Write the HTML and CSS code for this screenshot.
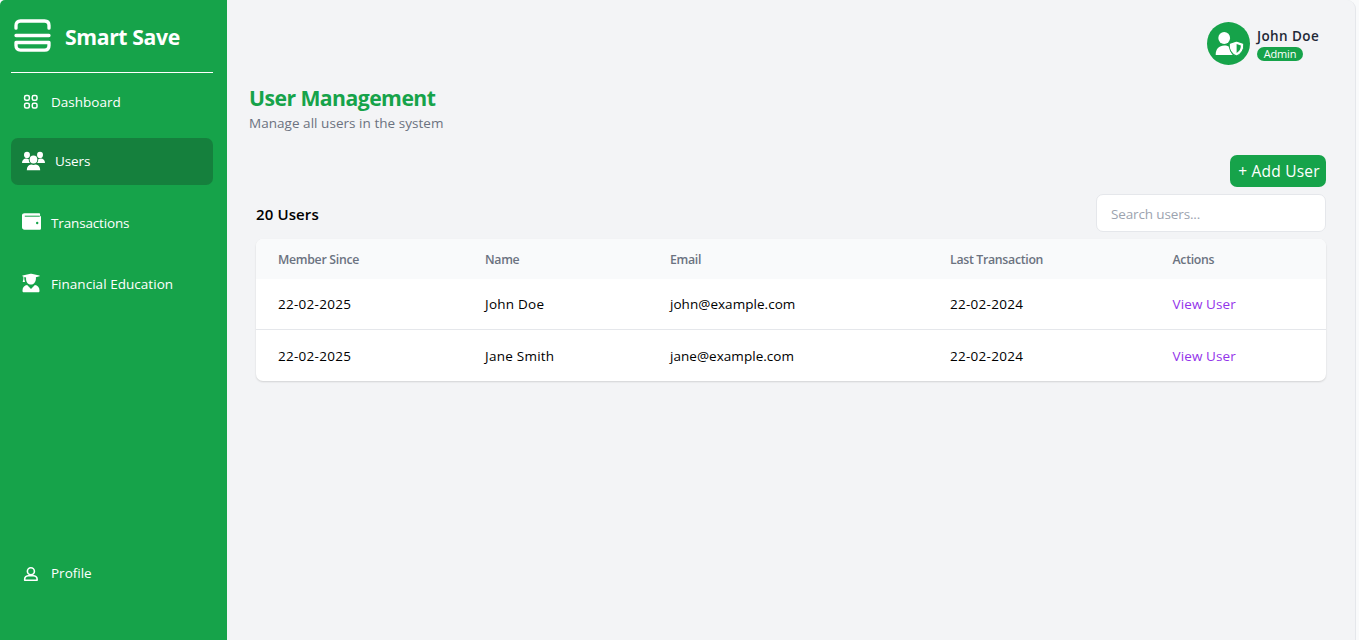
FILE: index.html
```html
<!DOCTYPE html>
<html lang="en">
<head>
<meta charset="utf-8">
<title>Smart Save</title>
<link rel="stylesheet" href="styles.css">
</head>
<body>
<div class="app">
  <aside class="sidebar">
    <div class="brand">
      <svg class="brand-logo" width="37" height="34" viewBox="0 0 37 34" fill="none" stroke="#fff" stroke-width="3.300" stroke-linecap="round" stroke-linejoin="round">
        <path d="M2 9.200V6.500C2 3.500 3.500 2 6.500 2h24C33.500 2 35 3.500 35 6.500v2.700M2 16.500h33M2 23.500h33v3c0 3-1.500 4.700-4.500 4.700h-24C3.500 31.200 2 29.500 2 26.500z"/>
      </svg>
      <span class="brand-name">Smart Save</span>
    </div>
    <nav class="nav">
      <a class="nav-item dashboard">
        <svg width="16" height="16" viewBox="0 0 16 16" fill="none" stroke="#fff" stroke-width="1.500"><rect x="1.600" y="1.600" width="4.700" height="4.700" rx="1.500"/><rect x="9.300" y="1.600" width="4.700" height="4.700" rx="1.500"/><rect x="1.600" y="9.300" width="4.700" height="4.700" rx="1.500"/><rect x="9.300" y="9.300" width="4.700" height="4.700" rx="1.500"/></svg>
        <span class="label">Dashboard</span>
      </a>
      <a class="nav-item users active">
        <svg width="23" height="20" viewBox="0 0 24 20" preserveAspectRatio="none" fill="#fff"><circle cx="5.200" cy="3.900" r="3.100"/><circle cx="18.800" cy="3.900" r="3.100"/><path d="M0 12c0-2.900 1.900-4.500 4.400-4.500 1.100 0 2 .3 2.600.8 0 1.400.4 2.700 1.200 3.700zM24 12c0-2.900-1.900-4.500-4.400-4.500-1.100 0-2 .3-2.600.8 0 1.400-.4 2.700-1.200 3.700z"/><circle cx="12" cy="8.600" r="4"/><path d="M5 19.300c0-3.600 2.100-5.500 4.600-5.700 1.500.6 3.300.6 4.800 0 2.500.2 4.600 2.100 4.600 5.700z"/></svg>
        <span class="label">Users</span>
      </a>
      <a class="nav-item transactions">
        <svg width="20" height="18" viewBox="0 0 20 18"><path fill="#fff" d="M2.500.3H17c.7 0 1.100.5 1.100 1.200v1.600c.5 0 .9.500.9 1.200v11c0 1-.6 1.500-1.500 1.500h-15C1 16.800 0 15.800 0 14.300V2.500C0 1.200 1 .3 2.500.3z"/><path d="M2.800 3.200h15" stroke="#16a34a" stroke-width="1"/><circle cx="15.200" cy="10" r="1.200" fill="#16a34a"/></svg>
        <span class="label">Transactions</span>
      </a>
      <a class="nav-item education">
        <svg width="18" height="20" viewBox="0 0 18 20" fill="#fff"><path d="M.6 2.400 8.500.7c.3-.1.700-.1 1 0l7.900 1.700c.5.200.5.700 0 .9l-3.500 1c.4 3.800-1.500 7.300-4.900 7.300S3.600 8.400 4.100 4.500L2.300 4v1.900L3 9H.7l.7-3.100V3.600l-.8-.3c-.5-.200-.5-.700 0-.900zM5.100 12.100 9 16l3.900-3.900c2.700.4 4.600 2.500 4.600 5.300v.5c0 .8-.5 1.300-1.300 1.300H1.800c-.8 0-1.300-.5-1.300-1.300v-.5c0-2.800 1.900-4.900 4.600-5.300z"/></svg>
        <span class="label">Financial Education</span>
      </a>
      <a class="nav-item profile">
        <svg width="16" height="16" viewBox="0 0 16 16" fill="none" stroke="#fff" stroke-width="1.600" stroke-linejoin="round"><circle cx="7.900" cy="5.200" r="3.500"/><path d="M1.700 14.200v-1.100c0-2 1.900-3.300 3.700-3.300h5c1.800 0 3.700 1.300 3.700 3.300v1.100z"/></svg>
        <span class="label">Profile</span>
      </a>
    </nav>
  </aside>
  <main class="main">
    <header class="account">
      <svg class="avatar" width="43" height="43" viewBox="0 0 43 43"><circle cx="21.500" cy="21.500" r="21.500" fill="#16a34a"/><circle cx="17.200" cy="16" r="5.900" fill="#fff"/><path fill="#fff" d="M8.700 33c0-6 3.300-9.500 8.600-9.500 2.400 0 4.300.6 5.800 1.900.2 3 1 5.600 2.700 7.600z"/><path fill="#fff" stroke="#16a34a" stroke-width="1.200" d="m29.500 18.900 7.300 2.500c.5 5.300-2.100 10.500-7.300 12.700-5.200-2.200-7.800-7.400-7.300-12.700z"/><path fill="#16a34a" d="m29.600 22 4.300 1.500c0 3.300-1.500 5.900-4.300 7.500z"/></svg>
      <div class="account-text">
        <span class="account-name">John Doe</span>
        <span class="role">Admin</span>
      </div>
    </header>
    <section class="heading">
      <h1>User Management</h1>
      <p>Manage all users in the system</p>
    </section>
    <div class="actions"><button class="add">+ Add User</button></div>
    <div class="toolbar">
      <h2>20 Users</h2>
      <input class="search" type="text" placeholder="Search users...">
    </div>
    <div class="card">
      <div class="row head"><span>Member Since</span><span>Name</span><span>Email</span><span>Last Transaction</span><span>Actions</span></div>
      <div class="row"><span class="date">22-02-2025</span><span class="name">John Doe</span><span class="email">john@example.com</span><span class="date">22-02-2024</span><a class="view">View User</a></div>
      <div class="row"><span class="date">22-02-2025</span><span class="name">Jane Smith</span><span class="email">jane@example.com</span><span class="date">22-02-2024</span><a class="view">View User</a></div>
    </div>
  </main>
</div>
</body>
</html>
```
FILE: styles.css
```css
* { box-sizing: border-box; }
body { margin: 0; background: #f9fafb; font-family: "Open Sans", "Noto Sans", sans-serif; font-size: 13.5px; color: #000; }
.app { display: flex; width: 1356px; height: 640px; background: #f3f4f6; border-right: 1px solid #e5e7eb; border-radius: 5px 9px 0 0; overflow: hidden; }
.sidebar { width: 227px; flex: none; padding: 0 14px 0 11px; background: #16a34a; color: #fff; display: flex; flex-direction: column; }
.brand { height: 73px; flex: none; display: flex; gap: 14px; padding: 19px 0 0 3px; border-bottom: 1px solid #fff; }
.brand-logo { display: block; }
.brand-name { font-size: 21.2px; line-height: 36px; font-weight: 700; letter-spacing: -.38px; white-space: nowrap; }
.nav { flex: 1; display: flex; flex-direction: column; }
.nav-item { display: flex; align-items: center; height: 47px; border-radius: 7px; padding-left: 11px; white-space: nowrap; }
.nav-item svg { flex: none; }
.dashboard { margin-top: 5px; padding-left: 12px; gap: 12px; }
.users { margin-top: 13px; gap: 10px; }
.users .label { padding-bottom: 2px; letter-spacing: -.1px; }
.users svg { margin-bottom: 2px; }
.active { background: #15803d; }
.transactions { margin-top: 14px; gap: 9px; letter-spacing: -.15px; }
.transactions svg { margin-bottom: 1px; }
.education { margin-top: 14px; padding-left: 11px; gap: 11px; letter-spacing: .04px; }
.education svg { margin-bottom: 1px; }
.profile { margin-top: auto; margin-bottom: 44px; padding-left: 12px; gap: 12px; }
.profile svg { margin-top: 3px; }
.main { flex: 1; padding: 22px 29px 0 22px; }
.account { display: flex; justify-content: flex-end; gap: 7px; height: 43px; padding-right: 7px; }
.account-text { width: 62px; white-space: nowrap; }
.account-name { display: block; font-weight: 600; line-height: 18px; padding-top: 5px; color: #1f2937; letter-spacing: .4px; }
.role { display: block; width: 46px; height: 14px; margin-top: 2px; border-radius: 7px; background: #16a34a; color: #fff; font-size: 11px; line-height: 14px; text-align: center; letter-spacing: -.2px; }
.heading { padding-top: 18px; height: 90px; }
h1 { margin: 0; font-size: 21.2px; line-height: 29px; color: #16a34a; font-weight: 700; letter-spacing: -.55px; }
.heading p { margin: 0; padding-top: 1px; line-height: 20px; color: #6b7280; letter-spacing: .04px; }
.actions { display: flex; justify-content: flex-end; }
.add { width: 96px; height: 32px; padding: 1px 0 0 2px; border: 0; border-radius: 7px; background: #16a34a; color: #fff; font: 15.5px/31px "Open Sans", sans-serif; letter-spacing: .22px; white-space: nowrap; }
.toolbar { display: flex; justify-content: space-between; margin-top: 7px; padding-left: 7px; height: 38px; }
h2 { margin: 0; font-size: 15px; line-height: 40px; font-weight: 600; letter-spacing: .12px; }
.search { width: 230px; height: 38px; border: 1px solid #e5e7eb; border-radius: 7px; background: #fff; padding: 2px 14px 0; font: 13.5px "Open Sans", sans-serif; letter-spacing: -.13px; }
.search::placeholder { color: #9ca3af; opacity: 1; }
.card { margin: 7px 0 0 7px; background: #fff; border-radius: 7px; box-shadow: 0 1px 2px rgba(0,0,0,.14); overflow: hidden; }
.row { display: grid; grid-template-columns: 207px 185px 280px 222.5px 1fr; align-items: center; height: 50px; padding-left: 22px; white-space: nowrap; }
.row + .row + .row { border-top: 1px solid #e5e7eb; height: 52px; }
.head { height: 40px; background: #f9fafb; color: #6b7280; font-weight: 600; font-size: 12.3px; letter-spacing: -.3px; }
.date { letter-spacing: .27px; }
.name { letter-spacing: .25px; }
.email { letter-spacing: .04px; }
.view { color: #9333ea; letter-spacing: .12px; }
```
